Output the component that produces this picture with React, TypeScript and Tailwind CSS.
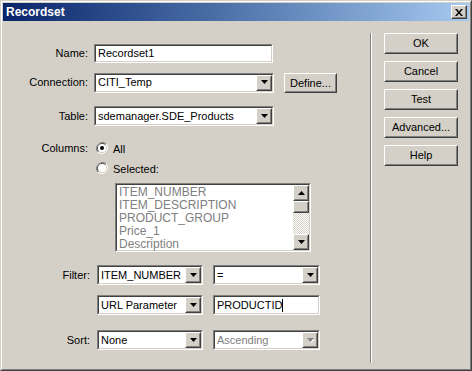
import React from 'react';

const Arrow = ({ disabled = false }: { disabled?: boolean }) => (
    <svg width="7" height="5" viewBox="0 0 7 5" className="block">
        {disabled && <path d="M1 1h7L4.5 5z" fill="#ffffff" />}
        <path d="M0 0h7L3.5 4z" fill={disabled ? '#808080' : '#000000'} />
    </svg>
);

const UpArrow = () => (
    <svg width="7" height="4" viewBox="0 0 7 4" className="block">
        <path d="M3.5 0L7 4H0z" fill="#000000" />
    </svg>
);

const Raised = ({ className = '', children }: { className?: string; children?: React.ReactNode }) => (
    <div className={`border border-t-white border-l-white border-r-[#404040] border-b-[#404040] bg-[#d4d0c8] ${className}`}>
        <div className="h-full w-full border border-t-[#d4d0c8] border-l-[#d4d0c8] border-r-[#808080] border-b-[#808080] flex items-center justify-center">
            {children}
        </div>
    </div>
);

const Sunken = ({ className = '', children, bg = 'bg-white' }: { className?: string; children?: React.ReactNode; bg?: string }) => (
    <div className={`border border-t-[#808080] border-l-[#808080] border-r-white border-b-white ${className}`}>
        <div className={`h-full w-full border border-t-[#404040] border-l-[#404040] border-r-[#d4d0c8] border-b-[#d4d0c8] flex items-center ${bg}`}>
            {children}
        </div>
    </div>
);

const Combo = ({ value, w, disabled = false }: { value: string; w: string; disabled?: boolean }) => (
    <Sunken className={`${w} h-[20px] shrink-0`}>
        <span className={`flex-1 pl-[2px] truncate leading-none ${disabled ? 'text-[#808080]' : 'text-black'}`}>{value}</span>
        <Raised className="w-[16px] h-[16px] shrink-0">
            <Arrow disabled={disabled} />
        </Raised>
    </Sunken>
);

const Radio = ({ checked }: { checked: boolean }) => (
    <svg width="12" height="12" viewBox="0 0 12 12" className="block shrink-0">
        <path d="M10.2 1.8A6 6 0 0 0 1.8 10.2" fill="none" stroke="#808080" strokeWidth="1" />
        <path d="M1.8 10.2A6 6 0 0 0 10.2 1.8" fill="none" stroke="#ffffff" strokeWidth="1" />
        <path d="M9.5 2.5A5 5 0 0 0 2.5 9.5" fill="none" stroke="#404040" strokeWidth="1" />
        <path d="M2.5 9.5A5 5 0 0 0 9.5 2.5" fill="none" stroke="#d4d0c8" strokeWidth="1" />
        <circle cx="6" cy="6" r="4" fill="#ffffff" />
        {checked && <circle cx="6" cy="6" r="2" fill="#000000" />}
    </svg>
);

const Btn = ({ label }: { label: string }) => (
    <Raised className="w-[74px] h-[21px]">
        <span className="leading-none">{label}</span>
    </Raised>
);

const columns = ['ITEM_NUMBER', 'ITEM_DESCRIPTION', 'PRODUCT_GROUP', 'Price_1', 'Description'];

export default function App() {
    return (
        <div className="w-[472px] h-[371px] bg-[#d4d0c8] border border-t-[#d4d0c8] border-l-[#d4d0c8] border-r-[#404040] border-b-[#404040] font-['Liberation_Sans',Arial,sans-serif] text-[11px] text-black select-none">
            <div className="h-full border border-t-white border-l-white border-r-[#808080] border-b-[#808080] p-px flex flex-col">
                {/* Title bar */}
                <div className="h-[18px] shrink-0 flex items-center justify-between bg-gradient-to-r from-[#0a246a] to-[#a6caf0] pl-[3px] pr-[2px]">
                    <span className="text-white font-bold text-[12px] leading-none">Recordset</span>
                    <Raised className="w-[16px] h-[14px]">
                        <svg width="8" height="7" viewBox="0 0 8 7" className="block">
                            <path d="M0 0h2l2 2.5L6 0h2L5 3.5 8 7H6L4 4.5 2 7H0l3-3.5z" fill="#000000" />
                        </svg>
                    </Raised>
                </div>

                {/* Body */}
                <div className="flex-1 flex">
                    <div className="w-[367px] shrink-0 flex flex-col">
                        {/* Name */}
                        <div className="mt-[23px] flex items-center gap-[6px]">
                            <span className="w-[85px] text-right">Name:</span>
                            <Sunken className="w-[179px] h-[19px]">
                                <span className="pl-[2px] leading-none">Recordset1</span>
                            </Sunken>
                        </div>

                        {/* Connection */}
                        <div className="mt-[9px] flex items-center gap-[6px]">
                            <span className="w-[85px] text-right">Connection:</span>
                            <Combo value="CITI_Temp" w="w-[180px]" />
                            <Raised className="ml-[4px] mt-[1px] w-[53px] h-[20px]">
                                <span className="leading-none">Define...</span>
                            </Raised>
                        </div>

                        {/* Table */}
                        <div className="mt-[13px] flex items-center gap-[6px]">
                            <span className="w-[85px] text-right">Table:</span>
                            <Combo value="sdemanager.SDE_Products" w="w-[180px]" />
                        </div>

                        {/* Columns */}
                        <div className="mt-[15px] flex items-center h-[14px]">
                            <span className="w-[85px] text-right">Columns:</span>
                            <div className="ml-[8px]"><Radio checked /></div>
                            <span className="ml-[5px] mt-[3px]">All</span>
                        </div>
                        <div className="mt-[6px] flex items-center h-[14px]">
                            <div className="ml-[93px]"><Radio checked={false} /></div>
                            <span className="ml-[5px] mt-[3px]">Selected:</span>
                        </div>

                        {/* Column list */}
                        <Sunken className="mt-[8px] ml-[112px] w-[196px] h-[69px]">
                            <div className="h-full w-full flex items-stretch">
                                <div className="flex-1 pl-[2px] pt-px flex flex-col text-[#808080] text-[12px] leading-[13px]">
                                    {columns.map((c) => (
                                        <span key={c}>{c}</span>
                                    ))}
                                </div>
                                <div className="w-[16px] flex flex-col">
                                    <Raised className="w-[16px] h-[16px] shrink-0"><UpArrow /></Raised>
                                    <Raised className="w-[16px] h-[12px] shrink-0" />
                                    <div className="flex-1 bg-[repeating-conic-gradient(#ffffff_0%_25%,#d4d0c8_0%_50%)] bg-[length:2px_2px]" />
                                    <Raised className="w-[16px] h-[16px] shrink-0"><Arrow /></Raised>
                                </div>
                            </div>
                        </Sunken>

                        {/* Filter */}
                        <div className="mt-[13px] flex items-center">
                            <span className="w-[87px] text-right">Filter:</span>
                            <div className="ml-[7px]"><Combo value="ITEM_NUMBER" w="w-[106px]" /></div>
                            <div className="ml-[10px]"><Combo value="=" w="w-[107px]" /></div>
                        </div>
                        <div className="mt-[10px] flex items-center">
                            <div className="ml-[94px]"><Combo value="URL Parameter" w="w-[106px]" /></div>
                            <Sunken className="ml-[10px] w-[107px] h-[20px]">
                                <span className="pl-[2px] leading-none">PRODUCTID</span>
                                <span className="w-px h-[13px] bg-black" />
                            </Sunken>
                        </div>

                        {/* Sort */}
                        <div className="mt-[15px] flex items-center">
                            <span className="w-[87px] text-right">Sort:</span>
                            <div className="ml-[7px]"><Combo value="None" w="w-[106px]" /></div>
                            <div className="ml-[10px]"><Combo value="Ascending" w="w-[107px]" disabled /></div>
                        </div>
                    </div>

                    {/* Separator */}
                    <div className="mt-[12px] mb-[5px] w-[2px] border-l border-l-[#808080] border-r border-r-white" />

                    {/* Buttons */}
                    <div className="ml-[12px] mt-[12px] flex flex-col gap-[7px]">
                        <Btn label="OK" />
                        <Btn label="Cancel" />
                        <Btn label="Test" />
                        <Btn label="Advanced..." />
                        <Btn label="Help" />
                    </div>
                </div>
            </div>
        </div>
    );
}
